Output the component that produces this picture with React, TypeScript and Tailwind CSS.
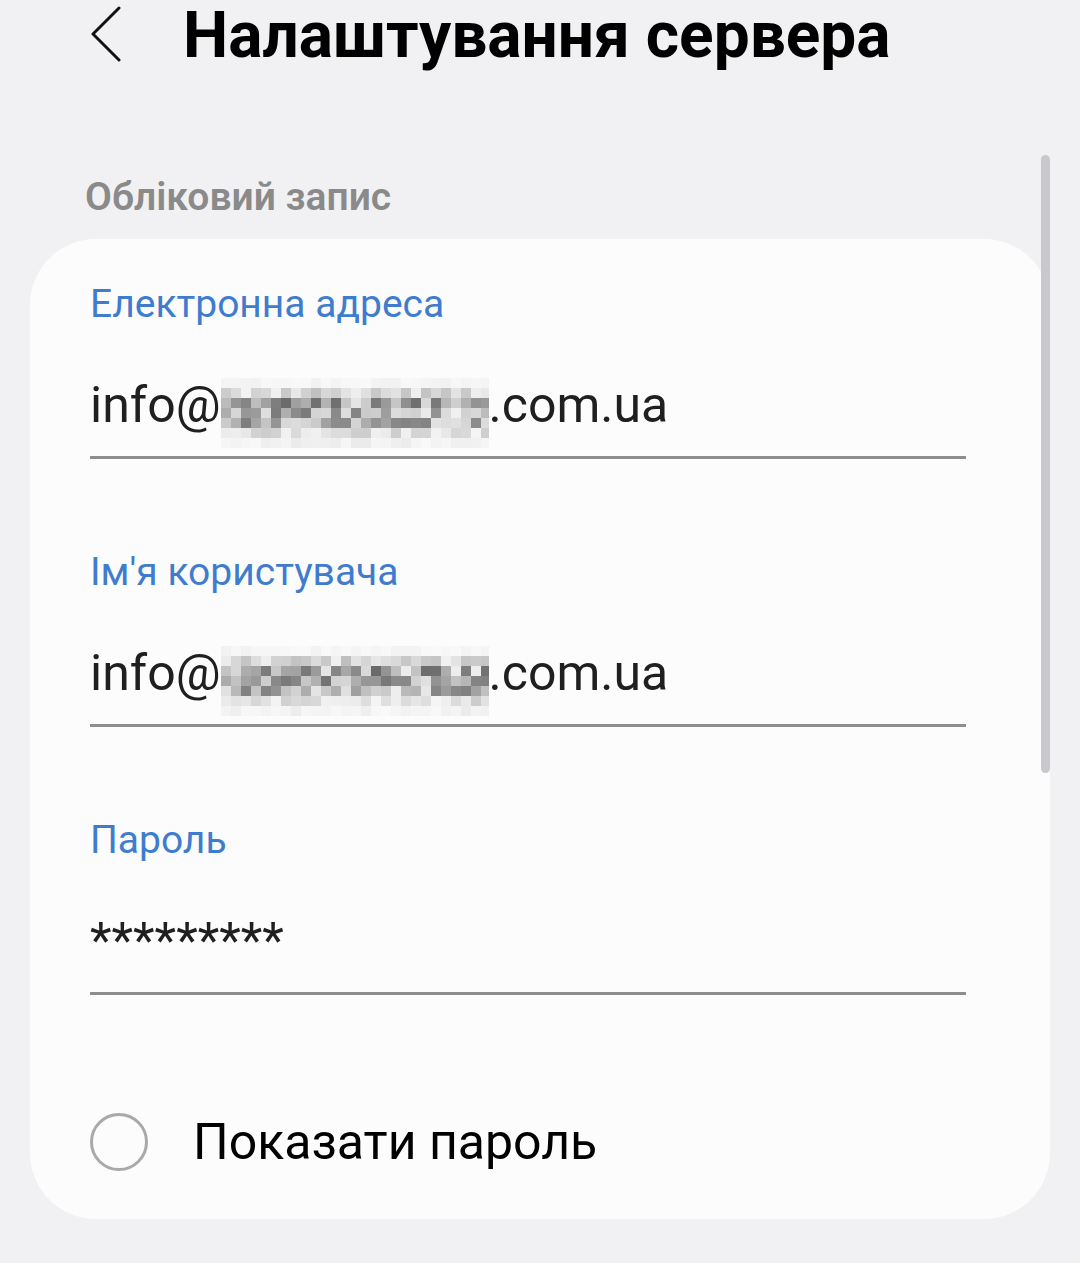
import React from "react";

function makeMosaic(seed: number, cols: number, rows: number) {
  let s = seed;
  const rnd = () => {
    s = (s * 1103515245 + 12345) % 2147483648;
    return s / 2147483648;
  };
  const profile = [0.03, 0.2, 0.5, 0.46, 0.42, 0.16, 0.05];
  const cells: string[][] = [];
  for (let r = 0; r < rows; r++) {
    const row: string[] = [];
    for (let c = 0; c < cols; c++) {
      const base = profile[r] ?? 0.1;
      let d = base * (0.3 + rnd() * 1.2);
      if (rnd() < 0.15) d *= 0.3;
      d = Math.min(d, 0.72);
      const g = Math.round(250 - d * 200);
      row.push(`rgb(${g},${g},${g})`);
    }
    cells.push(row);
  }
  return cells;
}

function Mosaic({ seed }: { seed: number }) {
  const cells = makeMosaic(seed, 27, 7);
  return (
    <svg width="268" height="70" viewBox="0 0 268 70" className="inline align-[-26px]">
      {cells.map((row, i) =>
        row.map((c, j) => (
          <rect key={`${i}-${j}`} x={j * 10} y={i * 10} width="10" height="10" fill={c} />
        ))
      )}
    </svg>
  );
}

function Field({
  label,
  children,
  first,
}: {
  label: string;
  children: React.ReactNode;
  first?: boolean;
}) {
  return (
    <div className={first ? "" : "mt-[91px]"}>
      <div className="text-[39px] leading-[44px] text-[#3f7cce]">{label}</div>
      <div className="mt-[51px] h-[56px] text-[50px] leading-[56px] text-[#1f1f1f] whitespace-nowrap">
        {children}
      </div>
      <div className="mt-[23px] h-[3px] bg-[#8e8e8e]" />
    </div>
  );
}

export default function App() {
  return (
    <div
      className="relative w-[1080px] h-[1263px] overflow-hidden bg-[#f1f1f3]"
      style={{ fontFamily: "Roboto, 'Noto Sans', sans-serif" }}
    >
      <div className="flex items-start pl-[90px] h-[76px]">
        <svg width="32" height="56" viewBox="0 0 32 56" className="mt-[6px] shrink-0">
          <path
            d="M29 2 L3 28 L29 54"
            fill="none"
            stroke="#111"
            strokeWidth="3"
            strokeLinecap="round"
            strokeLinejoin="round"
          />
        </svg>
        <div className="ml-[61px] text-[64px] leading-[72px] font-bold text-black whitespace-nowrap">
          Налаштування сервера
        </div>
      </div>

      <div className="mt-[98px] pl-[85px] text-[39px] leading-[46px] font-semibold text-[#8a8a8a]">
        Обліковий запис
      </div>

      <div className="mt-[19px] mx-[30px] h-[980px] rounded-[66px] bg-[#fcfcfc] pt-[43px] pl-[60px] pr-[84px]">
        <Field label="Електронна адреса" first>
          info@<Mosaic seed={7} />.com.ua
        </Field>
        <Field label="Ім'я користувача">
          info@<Mosaic seed={31} />.com.ua
        </Field>
        <Field label="Пароль">*********</Field>

        <div className="mt-[118px] flex items-center">
          <div className="w-[58px] h-[58px] rounded-full border-[3.5px] border-[#a9a9a9] shrink-0" />
          <div className="ml-[45px] text-[50px] leading-[56px] text-black">Показати пароль</div>
        </div>
      </div>

      <div className="absolute left-[1041px] top-[155px] w-[9px] h-[618px] rounded-full bg-[#c9c9cd]" />
    </div>
  );
}
